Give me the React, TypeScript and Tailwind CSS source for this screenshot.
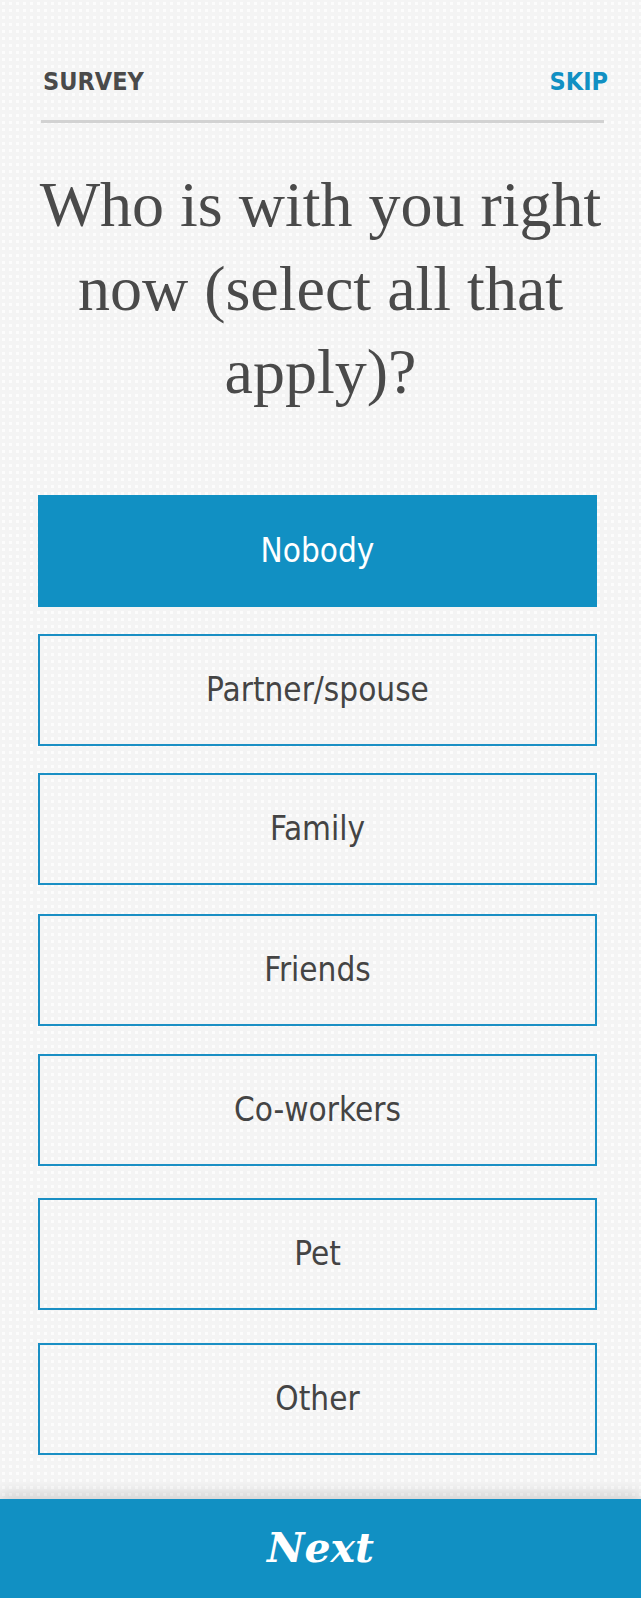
const OPTIONS = [
  { label: "Nobody", mt: "" },
  { label: "Partner/spouse", mt: "mt-[27px]" },
  { label: "Family", mt: "mt-[27px]" },
  { label: "Friends", mt: "mt-[29px]" },
  { label: "Co-workers", mt: "mt-[28px]" },
  { label: "Pet", mt: "mt-[32px]" },
  { label: "Other", mt: "mt-[33px]" },
];

export default function App() {
  const selected = "Nobody";

  return (
    <div className="relative flex h-[1598px] w-full flex-col overflow-hidden bg-[#f4f4f4] bg-[radial-gradient(circle,#fcfcfc_1.5px,transparent_2px)] bg-[length:7px_7px]">
      {/* Header */}
      <div className="flex items-center justify-between pl-[43px] pr-[33px] pt-[68px] font-['DejaVu_Sans',sans-serif] text-[25px] font-bold font-stretch-condensed leading-[28px]">
        <span className="text-[#4a4a4a]">SURVEY</span>
        <span className="text-[#1190c3]">SKIP</span>
      </div>
      <div className="ml-[41px] mt-[24px] h-[3px] w-[563px] bg-[#d2d2d2]" />

      {/* Question */}
      <h1 className="mt-[40px] px-[18px] text-center font-['Liberation_Serif',serif] text-[64px] leading-[83.5px] text-[#4a4a4a]">
        Who is with you right now (select all that apply)?
      </h1>

      {/* Options */}
      <div className="ml-[38px] mt-[81px] flex w-[559px] flex-col">
        {OPTIONS.map((opt) => (
          <button
            key={opt.label}
            className={`flex h-[112px] items-center justify-center border-2 font-['DejaVu_Sans',sans-serif] text-[33px] font-stretch-condensed ${opt.mt} ${
              opt.label === selected
                ? "border-[#1190c3] bg-[#1190c3] text-white"
                : "border-[#1a8fc4] bg-transparent text-[#444444]"
            }`}
          >
            {opt.label}
          </button>
        ))}
      </div>

      <div className="flex-1" />

      {/* Next */}
      <div className="flex h-[99px] items-center justify-center bg-[#1190c3] shadow-[0_-6px_14px_rgba(0,0,0,0.14)]">
        <span className="font-['DejaVu_Serif',serif] text-[41px] font-bold italic text-white">Next</span>
      </div>
    </div>
  );
}
